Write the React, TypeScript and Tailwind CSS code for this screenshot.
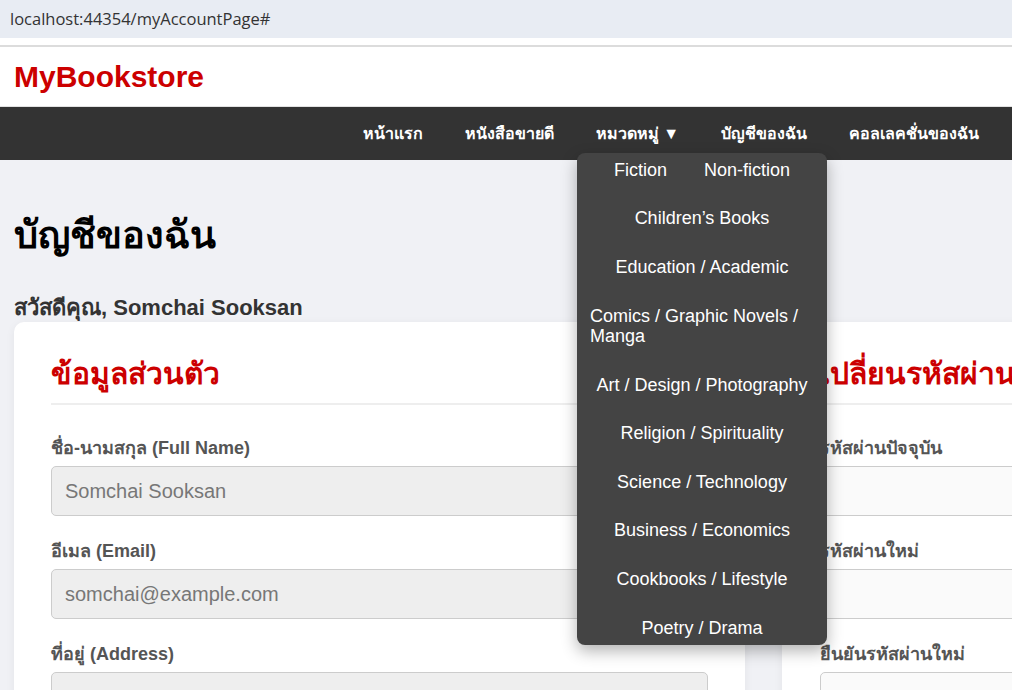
const navItems = ['หน้าแรก', 'หนังสือขายดี', 'หมวดหมู่ ▼', 'บัญชีของฉัน', 'คอลเลคชั่นของฉัน'];

const categories = [
  'Fiction',
  'Non-fiction',
  'Children’s Books',
  'Education / Academic',
  'Comics / Graphic Novels / Manga',
  'Art / Design / Photography',
  'Religion / Spirituality',
  'Science / Technology',
  'Business / Economics',
  'Cookbooks / Lifestyle',
  'Poetry / Drama',
];

const profileFields = [
  { label: 'ชื่อ-นามสกุล (Full Name)', value: 'Somchai Sooksan' },
  { label: 'อีเมล (Email)', value: 'somchai@example.com' },
  { label: 'ที่อยู่ (Address)', value: '' },
];

const passwordFields = ['รหัสผ่านปัจจุบัน', 'รหัสผ่านใหม่', 'ยืนยันรหัสผ่านใหม่'];

const App = () => {
  return (
    <div className="relative h-[690px] w-[1012px] overflow-hidden bg-[#f0f1f5] font-['Liberation_Sans','Noto_Sans',sans-serif]">
      {/* Address bar */}
      <div className="flex h-[38px] items-center bg-[#e8ecf3] pl-[10px] font-['Open_Sans',sans-serif] text-[16.5px] text-[#333]">
        localhost:44354/myAccountPage#
      </div>
      <div className="h-[7px] bg-white"></div>
      <div className="h-[2px] bg-[#dcdcdc]"></div>

      {/* Header */}
      <header className="flex h-[60px] items-center border-b border-[#e2e2e2] bg-white px-[14px]">
        <span className="text-[30px] leading-none font-bold text-[#cc0000]">MyBookstore</span>
      </header>

      {/* Nav */}
      <nav className="flex h-[53px] items-center justify-end bg-[#333] pr-[12px]">
        {navItems.map((item) => (
          <a key={item} href="#" className="px-[21px] text-[16px] font-bold text-white">
            {item}
          </a>
        ))}
      </nav>

      {/* Content */}
      <main className="px-[14px]">
        <h1 className="mt-[55px] text-[38px] leading-[40px] font-bold text-black">บัญชีของฉัน</h1>
        <p className="mt-[39px] text-[22px] leading-[28px] font-bold text-[#333]">
          สวัสดีคุณ, Somchai Sooksan
        </p>

        <div className="flex gap-[37px]">
          {/* Personal info */}
          <section className="w-[731px] shrink-0 rounded-[10px] bg-white px-[37px] pt-[32px] pb-10 shadow-[0_2px_10px_rgba(0,0,0,0.06)]">
            <h2 className="mb-[31px] border-b-2 border-[#eee] pb-[9px] text-[30px] leading-[40px] font-bold text-[#cc0000]">
              ข้อมูลส่วนตัว
            </h2>
            {profileFields.map((f) => (
              <div key={f.label} className="mb-[23px]">
                <label className="mb-[6px] block text-[18px] leading-[24px] font-bold text-[#555]">{f.label}</label>
                <div className="flex h-[50px] items-center rounded-[5px] border border-[#ccc] bg-[#eee] px-[13px] text-[20px] text-[#777]">
                  {f.value}
                </div>
              </div>
            ))}
          </section>

          {/* Change password */}
          <section className="w-[731px] shrink-0 rounded-[10px] bg-white px-[38px] pt-[32px] pb-10 shadow-[0_2px_10px_rgba(0,0,0,0.06)]">
            <h2 className="mb-[31px] border-b-2 border-[#eee] pb-[9px] text-[30px] leading-[40px] font-bold text-[#cc0000]">
              เปลี่ยนรหัสผ่าน
            </h2>
            {passwordFields.map((label) => (
              <div key={label} className="mb-[23px]">
                <label className="mb-[6px] block text-[18px] leading-[24px] font-bold text-[#555]">{label}</label>
                <div className="h-[50px] rounded-[5px] border border-[#ccc] bg-[#fafafa]"></div>
              </div>
            ))}
          </section>
        </div>
      </main>

      {/* Category dropdown */}
      <div className="absolute top-[153px] left-[577px] flex h-[492px] w-[250px] flex-wrap content-center justify-center gap-x-[11px] rounded-lg bg-[#444] shadow-[0_6px_16px_rgba(0,0,0,0.3)]">
        {categories.map((c) => (
          <a key={c} href="#" className="px-[13px] py-[14px] text-left text-[18px] leading-[20.6px] text-white">
            {c}
          </a>
        ))}
      </div>
    </div>
  );
};

export default App;
